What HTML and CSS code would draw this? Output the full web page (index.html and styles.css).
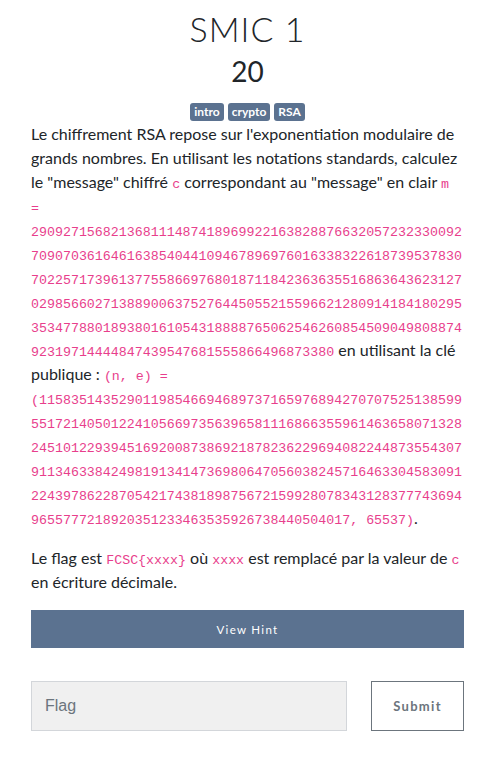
FILE: index.html
```html
<!DOCTYPE html>
<html lang="fr">
<head>
<meta charset="utf-8">
<title>SMIC 1</title>
<link rel="stylesheet" href="styles.css">
</head>
<body>
<div class="challenge">
  <h2 class="title">SMIC 1</h2>
  <h3 class="value">20</h3>
  <div class="tags">
    <span class="tag">intro</span>
    <span class="tag">crypto</span>
    <span class="tag">RSA</span>
  </div>
  <div class="description">
    <p>Le chiffrement RSA repose sur l'exponentiation modulaire de grands nombres. En utilisant les notations standards, calculez le "message" chiffré <code>c</code> correspondant au "message" en clair <code>m = 29092715682136811148741896992216382887663205723233009270907036164616385404410946789697601633832261873953783070225717396137755866976801871184236363551686364362312702985660271388900637527644505521559662128091418418029535347788018938016105431888876506254626085450904980887492319714444847439547681555866496873380</code> en utilisant la clé publique&#8239;: <code>(n, e) = (115835143529011985466946897371659768942707075251385995517214050122410566973563965811168663559614636580713282451012293945169200873869218782362296940822448735543079113463384249819134147369806470560382457164633045830912243978622870542174381898756721599280783431283777436949655777218920351233463535926738440504017, 65537)</code>.</p>
    <p>Le flag est <code>FCSC{xxxx}</code> où <code>xxxx</code> est remplacé par la valeur de <code>c</code> en écriture décimale.</p>
  </div>
  <button class="hint" type="button">View Hint</button>
  <form class="submit-row">
    <input class="flag-input" type="text" placeholder="Flag">
    <button class="submit" type="button">Submit</button>
  </form>
</div>
</body>
</html>
```

FILE: styles.css
```css
* { box-sizing: border-box; }
html, body { margin: 0; padding: 0; background: #fff; }
body {
  font-family: Lato, "Noto Sans", sans-serif;
  font-size: 16px;
  line-height: 1.5;
  color: #212529;
}
.challenge {
  padding: 7px 31px 20px 31px;
}
.title {
  margin: 0;
  text-align: center;
  font-family: Lato, sans-serif;
  font-weight: 300;
  font-size: 34px;
  line-height: 44px;
  letter-spacing: 1px;
  color: #212529;
}
.value {
  margin: 0;
  text-align: center;
  font-family: Lato, sans-serif;
  font-weight: 400;
  font-size: 28px;
  line-height: 40px;
  color: #212529;
}
.tags {
  display: flex;
  justify-content: center;
  gap: 4px;
  margin-top: 12px;
}
.tag {
  background: #5b7290;
  color: #fff;
  font-weight: 700;
  font-size: 12px;
  line-height: 18px;
  padding: 0 4px;
  border-radius: 3px;
}
.description {
  margin-top: 1px;
}
.description p {
  margin: 0 0 16px 0;
}
code {
  font-family: "Liberation Mono", monospace;
  font-size: 13.3px;
  line-height: 1;
  color: #e83e8c;
  overflow-wrap: break-word;
}
.hint {
  display: block;
  width: 100%;
  height: 38px;
  border: 0;
  background: #5b7290;
  color: #fff;
  font-family: Lato, sans-serif;
  font-size: 11.5px;
  letter-spacing: 1.3px;
  padding: 0;
}
.submit-row {
  display: flex;
  gap: 24px;
  margin-top: 33px;
}
.flag-input {
  flex: 1;
  height: 50px;
  background: #f0f0f0;
  border: 1px solid #d3d6da;
  padding: 0 13px;
  font-family: "Liberation Sans", Arial, sans-serif;
  font-size: 16px;
  color: #495057;
  outline: none;
}
.flag-input::placeholder { color: #6c757d; }
.submit {
  width: 93px;
  height: 50px;
  background: #fff;
  border: 1px solid #6c757d;
  color: #6c757d;
  font-family: Lato, sans-serif;
  font-weight: 700;
  font-size: 13px;
  letter-spacing: 1.3px;
  padding: 0;
}
```
